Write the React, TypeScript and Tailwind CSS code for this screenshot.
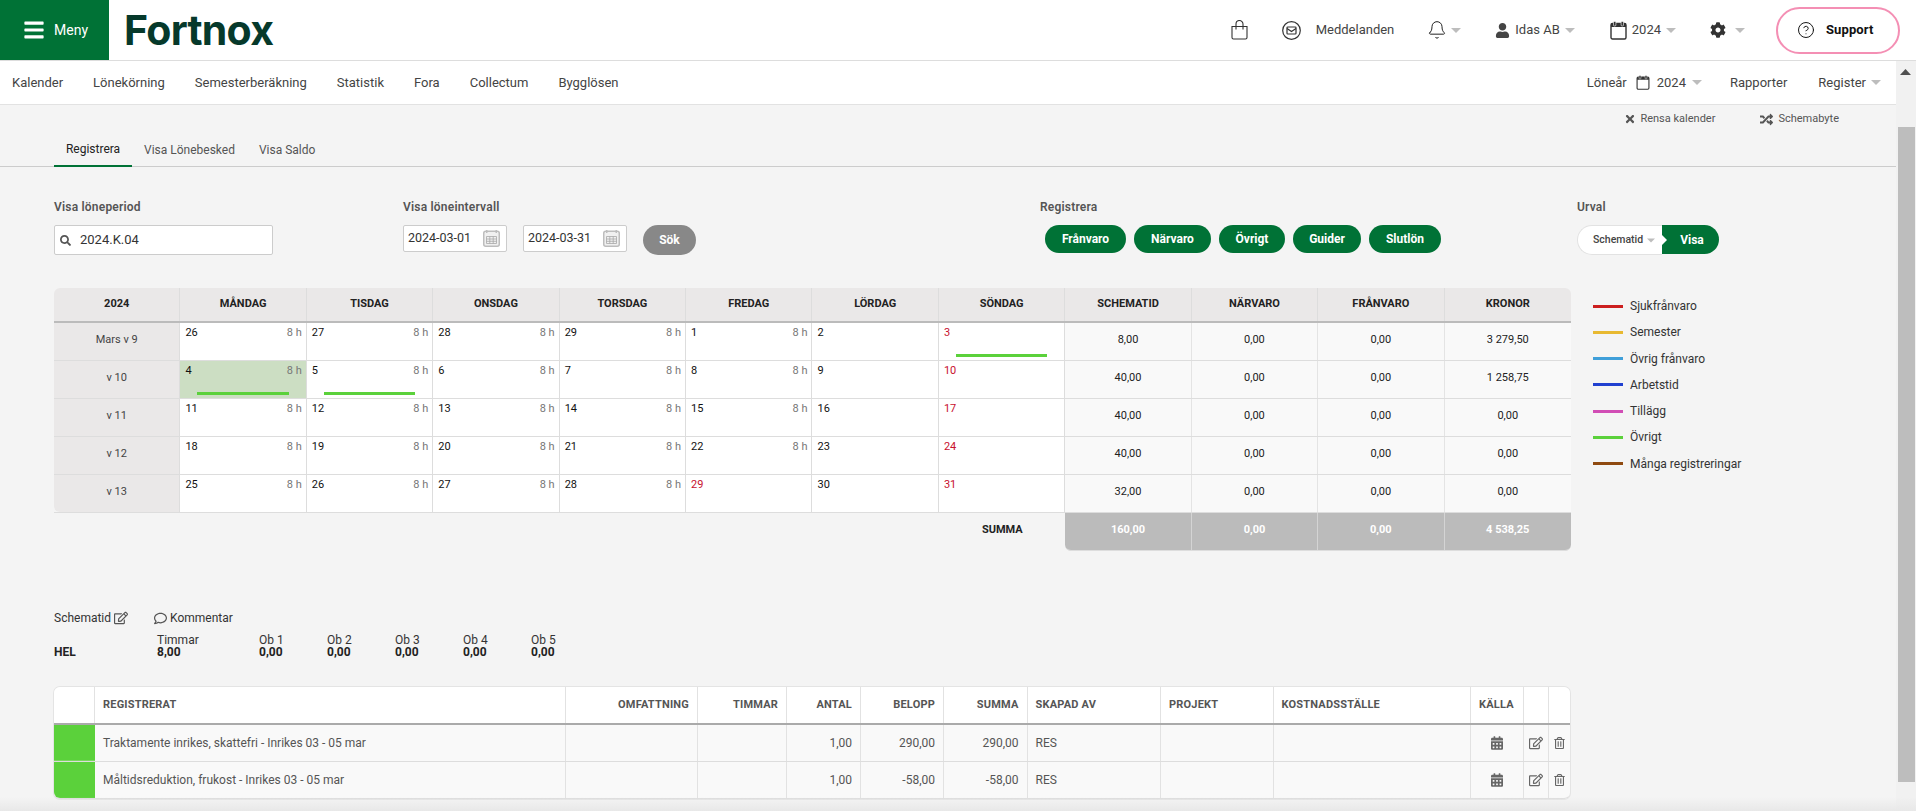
import React from "react";
import { Bell, CircleHelp } from "lucide-react";
import {
  FaBars, FaCalendarAlt, FaCog, FaRandom, FaRegComment, FaRegEdit, FaRegTrashAlt, FaSearch, FaTimes, FaUser,
} from "react-icons/fa";

function Caret({ className = "" }: { className?: string }) {
  return (
    <svg width="10" height="5" viewBox="0 0 10 5" className={className}>
      <path d="M0 0h10L5 5z" fill="#bdbdbd" />
    </svg>
  );
}

function DateIcon() {
  return (
    <svg width="17" height="17" viewBox="0 0 17 17" className="shrink-0">
      <rect x="0.75" y="1.25" width="15.5" height="15" rx="2" fill="#f0f0f0" stroke="#bdbdbd" strokeWidth="1.5" />
      <rect x="3" y="0" width="1.5" height="3" fill="#bdbdbd" />
      <rect x="12.5" y="0" width="1.5" height="3" fill="#bdbdbd" />
      <path d="M3.5 6.5h10v7h-10zM3.5 9h10M3.5 11.3h10M6.8 6.5v7M10.2 6.5v7" fill="none" stroke="#a8a8a8" strokeWidth="0.8" />
    </svg>
  );
}

function MailCircle() {
  return (
    <svg width="19" height="19" viewBox="0 0 19 19" fill="none" stroke="#333" strokeWidth="1.2">
      <circle cx="9.5" cy="9.5" r="8.8" />
      <rect x="5" y="6" width="9" height="7" rx="0.8" />
      <path d="M5 7.5l4.5 3 4.5-3" />
    </svg>
  );
}

function BagIcon() {
  return (
    <svg width="17" height="20" viewBox="0 0 17 20" fill="none" stroke="#333" strokeWidth="1.1">
      <path d="M1 6.5h15V17.5a1.5 1.5 0 0 1-1.5 1.5h-12A1.5 1.5 0 0 1 1 17.5z" />
      <path d="M5 9.5V4a3.5 3.5 0 0 1 7 0v5.5" />
    </svg>
  );
}

function CalendarO({ w, h, className = "" }: { w: number; h: number; className?: string }) {
  return (
    <svg width={w} height={h} viewBox="0 0 17 19" className={className} fill="none">
      <rect x="1" y="2.5" width="15" height="15.5" rx="1.5" stroke="#333" strokeWidth="1.4" />
      <rect x="1" y="2.5" width="15" height="3.5" fill="#333" />
      <rect x="3.5" y="0.5" width="2.4" height="4.5" rx="1" fill="#333" stroke="#fff" strokeWidth="0.6" />
      <rect x="11.1" y="0.5" width="2.4" height="4.5" rx="1" fill="#333" stroke="#fff" strokeWidth="0.6" />
    </svg>
  );
}

const navLeft = ["Kalender", "Lönekörning", "Semesterberäkning", "Statistik", "Fora", "Collectum", "Bygglösen"];

function Top() {
  return (
    <header className="flex h-[61px] shrink-0 items-center border-b border-[#dddddd] bg-white">
      <div className="flex h-[60px] w-[109px] shrink-0 items-center gap-[9px] self-start bg-[#007236] pl-[23px] text-[14px] text-white">
        <FaBars className="h-[22px] w-[22px]" />
        <span>Meny</span>
      </div>
      <div className="ml-[15px] text-[41px] leading-none font-bold tracking-[-0.7px] text-[#06392b] font-['Inter',sans-serif]">Fortnox</div>
      <div className="ml-auto flex items-center pr-[16px] text-[13px] text-[#444444]">
        <BagIcon />
        <span className="ml-[34px]"><MailCircle /></span>
        <span className="ml-[15px]">Meddelanden</span>
        <Bell size={20} strokeWidth={1.2} className="ml-[33px] text-[#222222]" />
        <Caret className="ml-[4px]" />
        <FaUser className="ml-[34px] h-[15px] w-[15px] text-[#444444]" />
        <span className="ml-[5px]">Idas AB</span>
        <Caret className="ml-[5px]" />
        <CalendarO w={17} h={19} className="ml-[35px]" />
        <span className="ml-[5px]">2024</span>
        <Caret className="ml-[5px]" />
        <FaCog className="ml-[34px] h-[16px] w-[16px] text-[#333333]" />
        <Caret className="ml-[9px]" />
        <button className="ml-[31px] flex h-[47px] w-[124px] items-center rounded-[24px] border-2 border-[#f48fb4] pl-[19px] text-[13px] font-bold tracking-[0.1px] text-[#111111]">
          <CircleHelp size={18} strokeWidth={1.3} />
          <span className="ml-[11px]">Support</span>
        </button>
      </div>
    </header>
  );
}

function SubNav() {
  return (
    <nav className="flex h-[44px] items-center border-b border-[#e2e2e2] bg-white pr-[15px] pl-[12px] text-[13px] text-[#444444]">
      <div className="flex gap-[30px]">{navLeft.map((n) => <span key={n}>{n}</span>)}</div>
      <div className="ml-auto flex items-center">
        <span>Löneår</span>
        <CalendarO w={14} h={15} className="ml-[9px]" />
        <span className="ml-[7px]">2024</span>
        <Caret className="ml-[6px]" />
        <span className="ml-[28px]">Rapporter</span>
        <span className="ml-[31px]">Register</span>
        <Caret className="ml-[5px]" />
      </div>
    </nav>
  );
}

function Actions() {
  return (
    <div className="flex h-[28px] items-center justify-end gap-[45px] pr-[57px] text-[11px] text-[#555555]">
      <span className="flex items-center gap-[4px]"><FaTimes className="h-[12px] w-[12px] text-[#555555]" />Rensa kalender</span>
      <span className="flex items-center gap-[5px]"><FaRandom className="h-[13px] w-[13px] text-[#555555]" />Schemabyte</span>
    </div>
  );
}

function Tabs() {
  return (
    <div className="flex h-[34px] items-stretch border-b border-[#cccccc] pl-[54px] text-[12px] text-[#555555]">
      <span className="-mb-px flex w-[78px] items-center justify-center border-b-2 border-[#007236] text-[#222222]">Registrera</span>
      <span className="ml-[12px] flex items-center">Visa Lönebesked</span>
      <span className="ml-[24px] flex items-center">Visa Saldo</span>
    </div>
  );
}

const label = "h-[16px] text-[12px] leading-[16px] font-semibold tracking-[0.2px] text-[#555555]";
const pill = "flex h-[28px] items-center justify-center rounded-[14px] bg-[#007236] text-[12px] font-bold text-white";

function DateBox({ value }: { value: string }) {
  return (
    <div className="flex h-[27px] w-[104px] items-center justify-between rounded-[2px] border border-[#cccccc] bg-white pr-[6px] pl-[4px] text-[12.5px] text-[#333333]">
      <span>{value}</span>
      <DateIcon />
    </div>
  );
}

function Filters() {
  return (
    <div className="mt-[32px] flex pl-[54px]">
      <div className="w-[349px]">
        <div className={label}>Visa löneperiod</div>
        <div className="mt-[10px] flex h-[30px] w-[219px] items-center rounded-[2px] border border-[#cccccc] bg-white pl-[5px] text-[13px] text-[#333333]">
          <FaSearch className="h-[11px] w-[11px] text-[#555555]" />
          <span className="ml-[9px]">2024.K.04</span>
        </div>
      </div>
      <div className="w-[637px]">
        <div className={label}>Visa löneintervall</div>
        <div className="mt-[10px] flex items-start">
          <DateBox value="2024-03-01" />
          <span className="ml-[16px]"><DateBox value="2024-03-31" /></span>
          <div className="ml-[16px] flex h-[30px] w-[53px] items-center justify-center rounded-[15px] bg-[#888888] text-[12px] font-bold text-white">Sök</div>
        </div>
      </div>
      <div className="w-[537px]">
        <div className={label}>Registrera</div>
        <div className="mt-[10px] ml-[5px] flex gap-[8px]">
          <div className={`${pill} w-[81px]`}>Frånvaro</div>
          <div className={`${pill} w-[77px]`}>Närvaro</div>
          <div className={`${pill} w-[66px]`}>Övrigt</div>
          <div className={`${pill} w-[68px]`}>Guider</div>
          <div className={`${pill} w-[72px]`}>Slutlön</div>
        </div>
      </div>
      <div>
        <div className={label}>Urval</div>
        <div className="mt-[10px] flex h-[30px] w-[142px] items-start">
          <div className="flex h-[30px] w-[85px] items-center rounded-l-[15px] border border-r-0 border-[#e2e2e2] bg-white pl-[15px] text-[10.5px] font-medium text-[#444444]">
            <span>Schematid</span>
            <Caret className="ml-[4px] w-[8px]" />
          </div>
          <div className="relative flex h-[29px] w-[57px] items-center justify-center rounded-r-[15px] bg-[#007236] pl-[3px] text-[12px] font-bold text-white">
            Visa
            <span className="absolute top-[10px] left-0 h-0 w-0 border-y-[5px] border-l-[5px] border-y-transparent border-l-white" />
          </div>
        </div>
      </div>
    </div>
  );
}

type Day = { n: string; h?: boolean; red?: boolean; bar?: boolean; sel?: boolean };
const d = (n: number, h = true, extra: Partial<Day> = {}): Day => ({ n: String(n), h, ...extra });

const weeks: { label: string; days: Day[]; nums: string[] }[] = [
  { label: "Mars v 9", days: [d(26), d(27), d(28), d(29), d(1), d(2, false), d(3, false, { red: true, bar: true })], nums: ["8,00", "0,00", "0,00", "3 279,50"] },
  { label: "v 10", days: [d(4, true, { sel: true, bar: true }), d(5, true, { bar: true }), d(6), d(7), d(8), d(9, false), d(10, false, { red: true })], nums: ["40,00", "0,00", "0,00", "1 258,75"] },
  { label: "v 11", days: [d(11), d(12), d(13), d(14), d(15), d(16, false), d(17, false, { red: true })], nums: ["40,00", "0,00", "0,00", "0,00"] },
  { label: "v 12", days: [d(18), d(19), d(20), d(21), d(22), d(23, false), d(24, false, { red: true })], nums: ["40,00", "0,00", "0,00", "0,00"] },
  { label: "v 13", days: [d(25), d(26), d(27), d(28), d(29, false, { red: true }), d(30, false), d(31, false, { red: true })], nums: ["32,00", "0,00", "0,00", "0,00"] },
];

const heads = ["2024", "MÅNDAG", "TISDAG", "ONSDAG", "TORSDAG", "FREDAG", "LÖRDAG", "SÖNDAG", "SCHEMATID", "NÄRVARO", "FRÅNVARO", "KRONOR"];

function Calendar() {
  return (
    <div className="mt-[33px] ml-[54px] w-[1517px] text-[11px]">
      <div className="grid h-[35px] grid-cols-12 overflow-hidden rounded-t-[6px] border-b-2 border-[#bbbbbb] bg-[#eae8e8]">
        {heads.map((h) => (
          <div key={h} className="flex items-center justify-center border-r border-[#dddddd] font-bold text-[#222222] last:border-r-0">{h}</div>
        ))}
      </div>
      {weeks.map((w, i) => (
        <div key={w.label} className="grid h-[38px] grid-cols-12 border-b border-[#dddddd]">
          <div className={`flex items-center justify-center border-r border-[#dddddd] bg-[#eae8e8] pb-[3px] text-[#444444] ${i === 4 ? "rounded-bl-[6px]" : ""}`}>{w.label}</div>
          {w.days.map((day, j) => (
            <div key={j} className={`flex flex-col border-r border-[#dddddd] ${day.sel ? "bg-[#ccdec3]" : "bg-white"}`}>
              <div className="flex justify-between pt-[2px] pr-[4px] pl-[5px] leading-[16px]">
                <span className={day.red ? "text-[#c8102e]" : "text-[#111111]"}>{day.n}</span>
                {day.h && <span className="text-[#777777]">8 h</span>}
              </div>
              {day.bar && <div className="mx-[17px] mt-auto mb-[3px] h-[3px] bg-[#5bd13b]" />}
            </div>
          ))}
          {w.nums.map((v, j) => (
            <div key={j} className="flex items-center justify-center border-r border-[#e4e4e4] bg-[#f9f9f9] pb-[3px] text-[#222222] last:border-r-0">{v}</div>
          ))}
        </div>
      ))}
      <div className="grid h-[38px] grid-cols-12">
        <div className="col-span-7" />
        <div className="flex items-center pb-[3px] pl-[43px] font-bold text-[#222222]">SUMMA</div>
        <div className="col-span-4 grid grid-cols-4 overflow-hidden rounded-b-[6px] border-b border-[#dddddd] bg-[#bbbbbb] font-bold text-white">
          {["160,00", "0,00", "0,00", "4 538,25"].map((v, j) => (
            <div key={j} className="flex items-center justify-center border-r border-[#d4d4d4] pb-[3px] last:border-r-0">{v}</div>
          ))}
        </div>
      </div>
    </div>
  );
}

const legend: [string, string][] = [
  ["Sjukfrånvaro", "bg-[#cc1f1f]"],
  ["Semester", "bg-[#e8b931]"],
  ["Övrig frånvaro", "bg-[#3f9fd9]"],
  ["Arbetstid", "bg-[#2040d0]"],
  ["Tillägg", "bg-[#d14db5]"],
  ["Övrigt", "bg-[#5bd13b]"],
  ["Många registreringar", "bg-[#8f4a10]"],
];

function Legend() {
  return (
    <div className="flex flex-col gap-[10.3px] pl-[22px] text-[12px] leading-[16px] text-[#333333]">
      {legend.map(([t, c]) => (
        <div key={t} className="flex items-center">
          <span className={`h-[3px] w-[30px] ${c}`} />
          <span className="ml-[7px]">{t}</span>
        </div>
      ))}
    </div>
  );
}

function Summary() {
  const obs = ["Ob 1", "Ob 2", "Ob 3", "Ob 4", "Ob 5"];
  return (
    <div className="pl-[54px] text-[12px] text-[#333333]">
      <div className="mt-[59px] flex h-[16px] items-center leading-[16px]">
        <span>Schematid</span>
        <FaRegEdit className="ml-[3px] h-[14px] w-[14px] text-[#555555]" />
        <FaRegComment className="ml-[26px] h-[13px] w-[13px] text-[#555555]" />
        <span className="ml-[3px]">Kommentar</span>
      </div>
      <div className="mt-[8px] flex leading-[12px]">
        <div className="flex w-[103px] items-end font-bold text-[#222222]">HEL</div>
        <div className="w-[102px]"><div>Timmar</div><div className="font-bold text-[#222222]">8,00</div></div>
        {obs.map((o) => (
          <div key={o} className="w-[68px]"><div>{o}</div><div className="font-bold text-[#222222]">0,00</div></div>
        ))}
      </div>
    </div>
  );
}

const regCols = "grid-cols-[41px_471px_132px_89px_74px_83px_83.5px_133.5px_112.5px_197.5px_52.5px_25px_22px]";
const regHead: [string, string][] = [
  ["", ""], ["REGISTRERAT", "justify-start"], ["OMFATTNING", "justify-end"], ["TIMMAR", "justify-end"], ["ANTAL", "justify-end"],
  ["BELOPP", "justify-end"], ["SUMMA", "justify-end"], ["SKAPAD AV", "justify-start"], ["PROJEKT", "justify-start"],
  ["KOSTNADSSTÄLLE", "justify-start"], ["KÄLLA", "justify-start"], ["", ""], ["", ""],
];
const regRows = [
  { t: "Traktamente inrikes, skattefri - Inrikes 03 - 05 mar", a: "290,00" },
  { t: "Måltidsreduktion, frukost - Inrikes 03 - 05 mar", a: "-58,00" },
];

function RegTable() {
  const line = "flex items-center border-r border-[#e2e2e2]";
  const cell = `${line} px-[8px]`;
  return (
    <div className="mt-[29px] ml-[54px] w-[1516px] rounded-[6px] text-[12px] text-[#555555] ring-1 ring-[#e4e4e4]">
      <div className={`grid h-[38px] ${regCols} rounded-t-[6px] border-b-2 border-[#aaaaaa] bg-white`}>
        {regHead.map(([h, j], i) => (
          <div key={i} className={`${cell} ${j} text-[11px] font-bold tracking-[0.2px] last:border-r-0`}>{h}</div>
        ))}
      </div>
      {regRows.map((r, i) => (
        <div key={i} className={`grid h-[37px] ${regCols} border-b border-[#dddddd] bg-[#f9f9f9] ${i === 1 ? "rounded-b-[6px]" : ""}`}>
          <div className={`border-b border-[#7ad95f] bg-[#5bd13b] ${i === 1 ? "rounded-bl-[6px] border-b-0" : ""}`} />
          <div className={cell}>{r.t}</div>
          <div className={cell} />
          <div className={cell} />
          <div className={`${cell} justify-end`}>1,00</div>
          <div className={`${cell} justify-end`}>{r.a}</div>
          <div className={`${cell} justify-end`}>{r.a}</div>
          <div className={cell}>RES</div>
          <div className={cell} />
          <div className={cell} />
          <div className={`${line} justify-center`}><FaCalendarAlt className="h-[14px] w-[12px] text-[#666666]" /></div>
          <div className={`${line} justify-center`}><FaRegEdit className="h-[14px] w-[14px] text-[#666666]" /></div>
          <div className="flex items-center justify-center"><FaRegTrashAlt className="h-[12px] w-[11px] text-[#666666]" /></div>
        </div>
      ))}
    </div>
  );
}

function Scrollbar() {
  return (
    <div className="flex w-[20px] shrink-0 flex-col bg-[#f1f1f1]">
      <svg width="11" height="6" viewBox="0 0 11 6" className="mt-[8px] ml-[4px]">
        <path d="M0 6L5.5 0 11 6z" fill="#505050" />
      </svg>
      <div className="mt-[52px] ml-[2px] h-[655px] w-[17px] bg-[#bdbdbd]" />
    </div>
  );
}

export default function App() {
  return (
    <div className="relative flex h-screen w-full flex-col overflow-hidden bg-[#f4f4f4] font-['Roboto',sans-serif]">
      <Top />
      <div className="flex min-h-0 flex-1">
        <main className="min-w-0 flex-1">
          <SubNav />
          <Actions />
          <Tabs />
          <Filters />
          <div className="flex items-start">
            <Calendar />
            <div className="mt-[33px] pt-[10px]"><Legend /></div>
          </div>
          <Summary />
          <RegTable />
        </main>
        <Scrollbar />
      </div>
      <div className="pointer-events-none absolute right-0 bottom-0 left-0 h-[14px] bg-gradient-to-b from-transparent to-[#e8e8e8]" />
    </div>
  );
}
